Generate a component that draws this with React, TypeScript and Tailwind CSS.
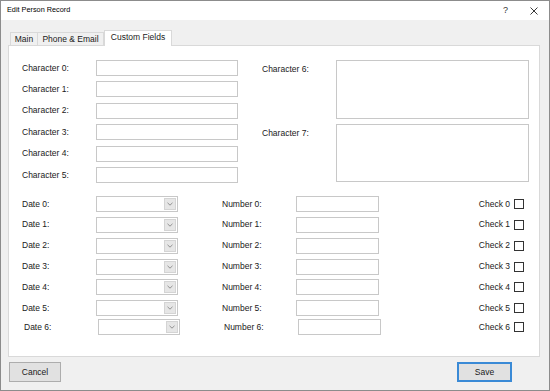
import React from "react";

const chars = [0, 1, 2, 3, 4, 5];
const rows = [0, 1, 2, 3, 4, 5, 6];

function Combo() {
  return (
    <div className="flex h-[16px] w-[82px] border border-[#c8c8c8] bg-white">
      <div className="flex-1" />
      <div className="my-[1px] mr-[1px] flex w-[12px] items-center justify-center border border-[#d4d4d4] bg-[#e6e6e6]">
        <svg width="6" height="4" viewBox="0 0 6 4">
          <path d="M0.5 0.8 L3 3.2 L5.5 0.8" fill="none" stroke="#7a7a7a" strokeWidth="0.8" />
        </svg>
      </div>
    </div>
  );
}

export default function App() {
  return (
    <div
      className="flex h-[391px] w-[550px] flex-col border border-[#8c8c8c] bg-[#f0f0f0] text-[8.5px] text-[#1a1a1a]"
      style={{ fontFamily: '"Liberation Sans", Arial, sans-serif' }}
    >
      {/* Title bar */}
      <div className="flex h-[19px] items-center bg-white pl-[6px]">
        <span className="text-[7.3px] text-black">Edit Person Record</span>
        <div className="flex-1" />
        <span className="mr-[22px] text-[9px] text-[#333]">?</span>
        <svg width="8" height="8" viewBox="0 0 8 8" className="mr-[11px]">
          <path d="M0.5 0.5 L7.5 7.5 M7.5 0.5 L0.5 7.5" stroke="#222" strokeWidth="0.9" />
        </svg>
      </div>

      {/* Body */}
      <div className="flex flex-1 flex-col pl-[7px]">
        {/* Tabs */}
        <div className="relative z-10 mt-[10px] flex h-[15px] items-end pl-[2px]">
          <div className="flex h-[13px] w-[28px] items-center justify-center border border-b-0 border-[#d9d9d9] bg-[#f0f0f0]">
            Main
          </div>
          <div className="flex h-[13px] w-[66px] items-center justify-center border border-b-0 border-l-0 border-[#d9d9d9] bg-[#f0f0f0]">
            Phone &amp; Email
          </div>
          <div className="mb-[-1px] flex h-[16px] w-[68px] items-center justify-center border border-b-0 border-[#d9d9d9] bg-white pb-[2px]">
            Custom Fields
          </div>
        </div>

        {/* Panel */}
        <div className="flex h-[312px] w-[532px] flex-col border border-[#d9d9d9] bg-white">
          {/* Upper section */}
          <div className="mt-[14px] flex">
            <div className="grid grid-cols-[74px_142px] gap-y-[5.4px] pl-[13px]">
              {chars.map((i) => (
                <React.Fragment key={i}>
                  <div className="flex h-[16px] items-center">Character {i}:</div>
                  <div className="h-[16px] border border-[#c8c8c8] bg-white" />
                </React.Fragment>
              ))}
            </div>
            <div className="ml-[24px] grid grid-cols-[74px_193px] gap-y-[5px]">
              <div className="pt-[3px]">Character 6:</div>
              <div className="h-[59px] border border-[#c8c8c8] bg-white" />
              <div className="pt-[3px]">Character 7:</div>
              <div className="h-[58px] border border-[#c8c8c8] bg-white" />
            </div>
          </div>

          {/* Lower section */}
          <div className="mt-[13px] flex flex-col">
            {rows.map((i) => (
              <div
                key={i}
                className={
                  i === 6
                    ? "mt-[3px] flex h-[16px] items-center pl-[15px] pr-[15px]"
                    : i === 0
                    ? "flex h-[16px] items-center pl-[13px] pr-[15px]"
                    : "mt-[4.86px] flex h-[16px] items-center pl-[13px] pr-[15px]"
                }
              >
                <div className="w-[74px]">Date {i}:</div>
                <Combo />
                <div className="ml-[44px] w-[74px]">Number {i}:</div>
                <div className="h-[16px] w-[83px] border border-[#c8c8c8] bg-white" />
                <div className="flex-1" />
                <span>Check {i}</span>
                <div className="ml-[4px] h-[10px] w-[10px] border border-[#333] bg-white" />
              </div>
            ))}
          </div>
        </div>

        {/* Buttons */}
        <div className="mt-[5px] flex pl-[1px] pr-[37px]">
          <div className="flex h-[20px] w-[52px] items-center justify-center border border-[#adadad] bg-[#e1e1e1]">
            Cancel
          </div>
          <div className="flex-1" />
          <div className="flex h-[20px] w-[55px] items-center justify-center border-2 border-[#3a8ad6] bg-[#e1e1e1]">
            Save
          </div>
        </div>
      </div>
    </div>
  );
}
